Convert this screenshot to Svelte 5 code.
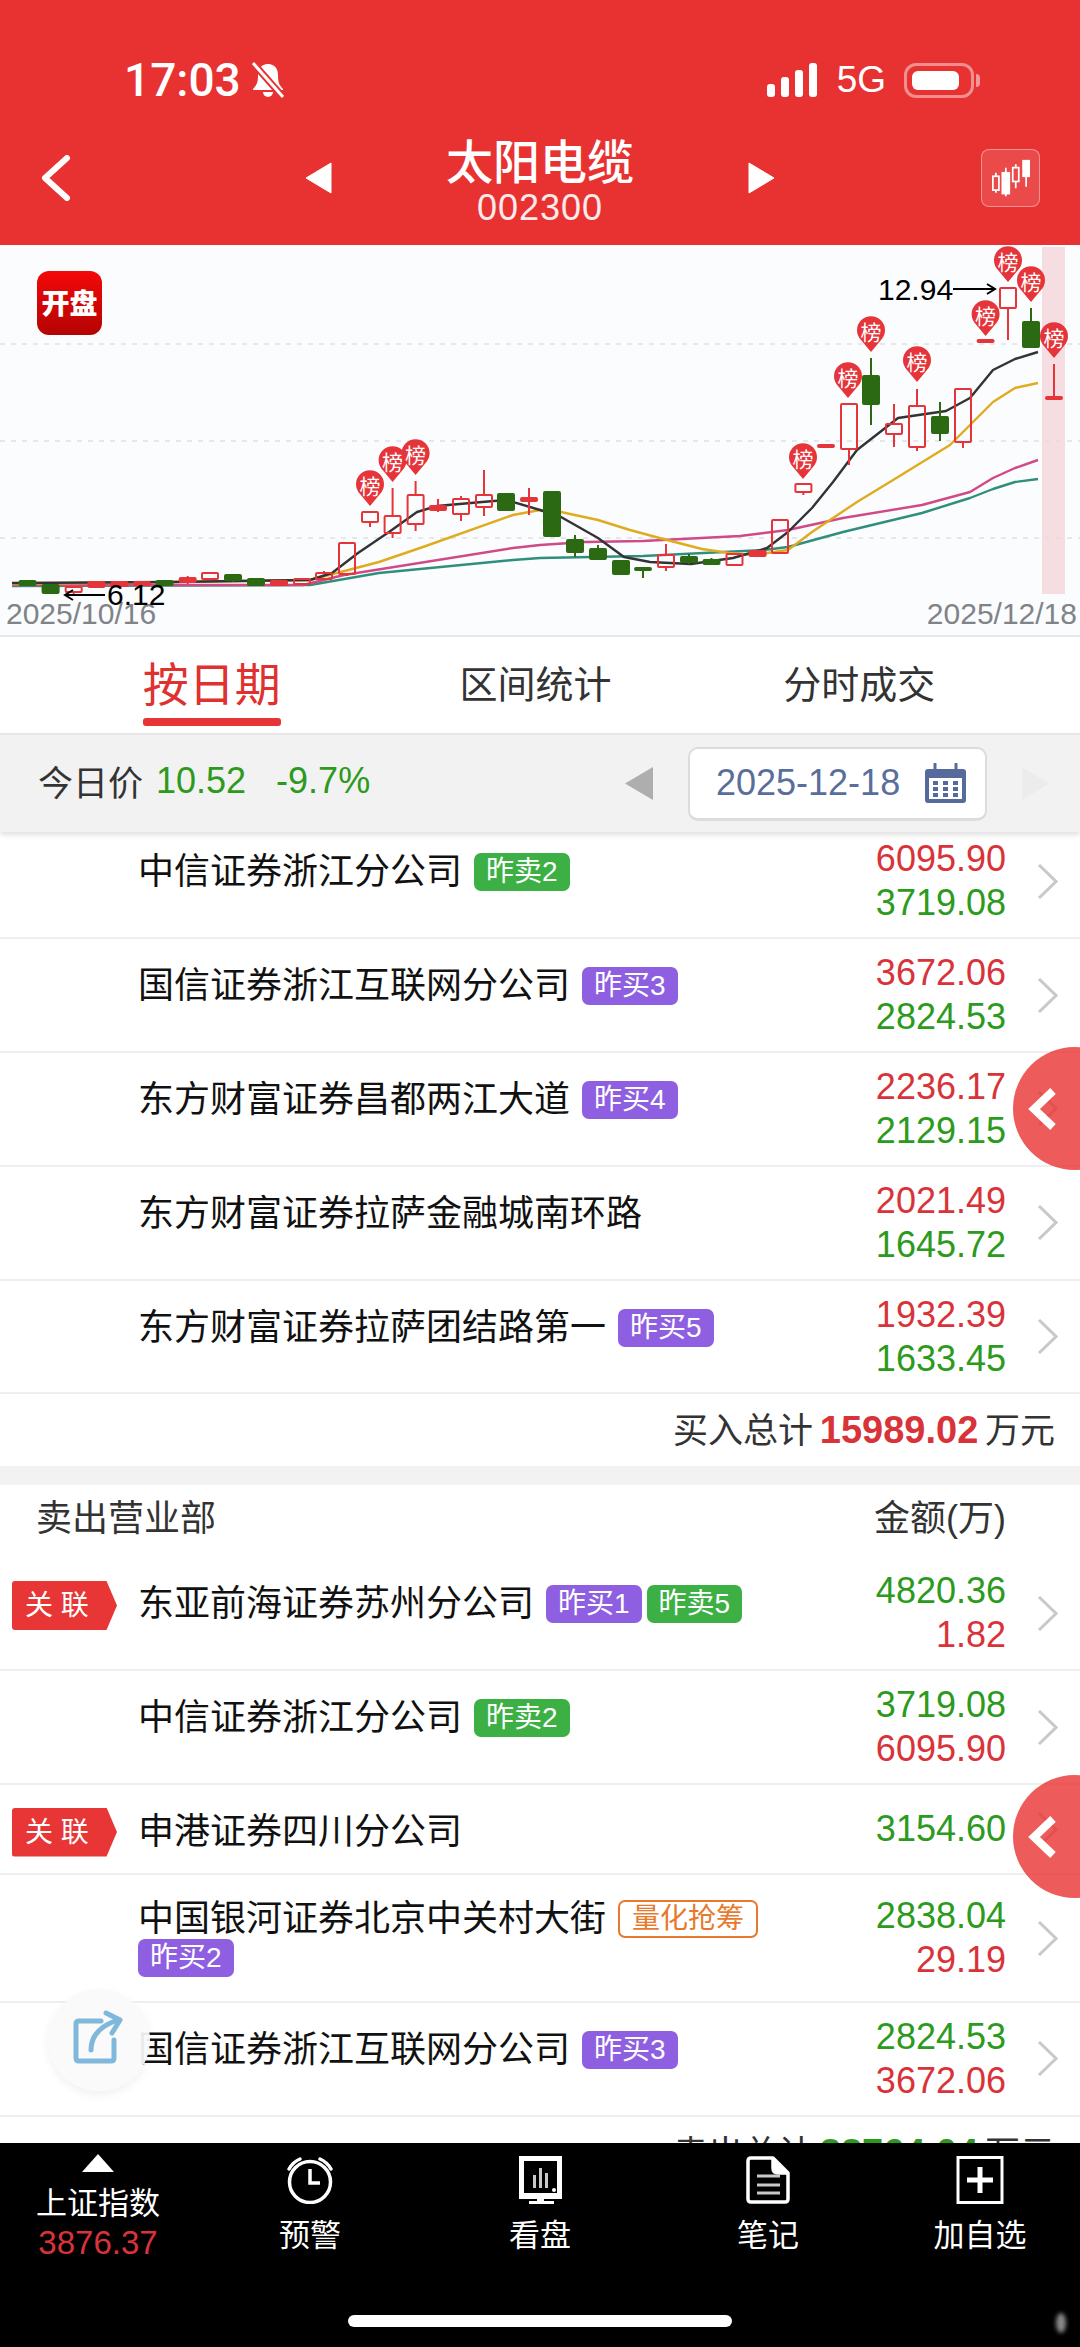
<script>
  // [x, bodyTop, bodyBottom, wickHigh, wickLow, kind]  r = hollow red, f = solid red, g = green
  const candles = [
    [27.5, 581, 585, 581, 585, 'g'], [50.6, 585, 593, 585, 594, 'g'], [73.7, 587, 592, 587, 594, 'r'],
    [96.4, 582, 587, 582, 587, 'f'], [119.5, 582, 586, 582, 586, 'f'], [142, 582, 585, 582, 585, 'f'],
    [164.6, 581, 585, 581, 585, 'g'], [187.7, 578, 582, 576, 584, 'f'], [210, 573, 579, 573, 579, 'r'],
    [233, 575, 580, 575, 582, 'g'], [256, 579, 585, 579, 585, 'g'], [279, 581, 585, 581, 585, 'f'],
    [302, 579, 584, 579, 584, 'r'], [324, 573, 579, 571, 579, 'r'], [347, 543, 574, 543, 576, 'r'],
    [370, 512, 522, 512, 527, 'r'], [392.6, 516, 533, 488, 538, 'r'], [415.6, 495, 524, 481, 531, 'r'],
    [438, 506, 510, 499, 512, 'f'], [461, 499, 514, 496, 521, 'r'], [484, 495, 507, 470, 516, 'r'],
    [506, 494, 510, 494, 510, 'g'], [529, 498, 501, 488, 515, 'f'], [552, 492, 536, 492, 536, 'g'],
    [575, 540, 552, 535, 557, 'g'], [598, 549, 559, 545, 559, 'g'], [621, 561, 574, 560, 574, 'g'],
    [643, 568, 570, 568, 578, 'g'], [666, 555, 567, 544, 571, 'r'], [689, 557, 562, 554, 564, 'g'],
    [711.5, 560, 564, 558, 565, 'g'], [734.5, 554, 565, 554, 565, 'r'], [757.6, 551, 556, 551, 556, 'f'],
    [780, 520, 553, 520, 553, 'r'], [803.4, 484, 492, 484, 495, 'r'], [826, 445, 447, 445, 447, 'f'],
    [849, 404, 449, 404, 465, 'r'], [871, 376, 404, 358, 425, 'g'], [894, 424, 434, 404, 447, 'r'],
    [917, 406, 447, 389, 451, 'r'], [940, 417, 433, 402, 441, 'g'], [963, 389, 442, 389, 448, 'r'],
    [985.6, 340, 342, 340, 342, 'f'], [1008, 288, 308, 288, 340, 'r'], [1031, 322, 347, 308, 347, 'g'],
    [1054, 397, 399, 364, 399, 'f']
  ];

  const lines = [
    { color: '#2f8f7c', pts: '12,586 310,585 379,573 513,560 540,558 643,556 764,550 788,547 843,532 922,513 970,498 993,489 1015,482 1038,479' },
    { color: '#cf4a86', pts: '12,585 303,585 344,575 513,548 540,545 585,542 643,541 740,536 788,530 843,518 922,505 970,492 993,478 1015,468 1038,460' },
    { color: '#e0ab1e', pts: '12,584 172,582 310,580 379,562 423,547 513,515 540,510 561,512 598,520 630,530 667,540 702,549 729,553 753,555 788,550 812,532 857,502 898,477 950,445 970,425 993,402 1015,388 1038,383' },
    { color: '#333333', pts: '12,583 172,582 310,580 332,573 358,553 389,532 417,512 437,506 482,502 506,500 540,510 561,517 598,538 624,557 650,562 691,564 733,558 767,548 788,532 812,508 833,482 857,450 898,418 946,411 970,398 993,370 1015,359 1038,352' }
  ];

  // [x, tip y]
  const pins = [
    [370, 506], [392.6, 482], [415.6, 475], [803, 479], [848, 398], [871, 352],
    [917, 382], [985.6, 336], [1008, 282], [1031, 302], [1054, 358]
  ];

  const pinPath = (x, tip) =>
    `M${x} ${tip}L${x - 10} ${tip - 12}A14 14 0 1 1 ${x + 10} ${tip - 12}Z`;

  const buyRows = [
    { name: '中信证券浙江分公司', tags: [['昨卖2', 'green']], a: ['6095.90', 'up'], b: ['3719.08', 'down'] },
    { name: '国信证券浙江互联网分公司', tags: [['昨买3', 'purple']], a: ['3672.06', 'up'], b: ['2824.53', 'down'] },
    { name: '东方财富证券昌都两江大道', tags: [['昨买4', 'purple']], a: ['2236.17', 'up'], b: ['2129.15', 'down'] },
    { name: '东方财富证券拉萨金融城南环路', tags: [], a: ['2021.49', 'up'], b: ['1645.72', 'down'] },
    { name: '东方财富证券拉萨团结路第一', tags: [['昨买5', 'purple']], a: ['1932.39', 'up'], b: ['1633.45', 'down'] }
  ];

  const sellRows = [
    { name: '东亚前海证券苏州分公司', flag: true, tags: [['昨买1', 'purple'], ['昨卖5', 'green']], a: ['4820.36', 'down'], b: ['1.82', 'up'] },
    { name: '中信证券浙江分公司', tags: [['昨卖2', 'green']], a: ['3719.08', 'down'], b: ['6095.90', 'up'] },
    { name: '申港证券四川分公司', flag: true, short: true, tags: [], a: ['3154.60', 'down'] },
    { name: '中国银河证券北京中关村大街', tall: true, tags: [['量化抢筹', 'orange'], ['昨买2', 'purple']], a: ['2838.04', 'down'], b: ['29.19', 'up'] },
    { name: '国信证券浙江互联网分公司', tags: [['昨买3', 'purple']], a: ['2824.53', 'down'], b: ['3672.06', 'up'] }
  ];
</script>

{#snippet row(r)}
  <div class="row" class:short={r.short} class:tall={r.tall}>
    <div class="slot">
      {#if r.flag}<span class="flag">关 联</span>{/if}
    </div>
    <div class="name">
      <span>{r.name}</span>
      {#each r.tags as t}
        <span class="tag {t[1]}">{t[0]}</span>
      {/each}
    </div>
    <div class="amounts">
      <span class={r.a[1]}>{r.a[0]}</span>
      {#if r.b}<span class={r.b[1]}>{r.b[0]}</span>{/if}
    </div>
    <svg class="chev" viewBox="0 0 21 35"><path d="M2 1L19 17.5L2 34" /></svg>
  </div>
{/snippet}

<div class="page">
  <header class="top">
    <div class="status">
      <div class="status-left">
        <span class="time">17:03</span>
        <svg width="38" height="36" viewBox="0 0 38 36">
          <path d="M19 2c-7 0-10 5-10 11 0 7-1 10-5 14v1h30v-1c-4-4-5-7-5-14 0-6-3-11-10-11z" fill="#fff" />
          <path d="M14 30a5 5 0 0 0 10 0z" fill="#fff" />
          <path d="M4 1L34 35" stroke="#e83232" stroke-width="7" />
          <path d="M4 1L34 35" stroke="#fff" stroke-width="3" />
        </svg>
      </div>
      <div class="status-right">
        <div class="signal"><i></i><i></i><i></i><i></i></div>
        <span class="net">5G</span>
        <div class="battery"><b></b></div>
      </div>
    </div>
    <nav class="nav">
      <svg class="back" width="32" height="46" viewBox="0 0 32 46"><path d="M27 3L5 23L27 43" /></svg>
      <div class="stock">
        <svg class="tri" width="28" height="32" viewBox="0 0 28 32"><path d="M27 1L2 16L27 31Z" fill="#fff" stroke="#fff" stroke-linejoin="round" /></svg>
        <div class="stock-name">
          <h1>太阳电缆</h1>
          <span>002300</span>
        </div>
        <svg class="tri" width="28" height="32" viewBox="0 0 28 32"><path d="M1 1L26 16L1 31Z" fill="#fff" stroke="#fff" stroke-linejoin="round" /></svg>
      </div>
      <div class="kline-btn">
        <svg width="40" height="38" viewBox="0 0 46 44" fill="none" stroke="#fff" stroke-width="2">
          <rect x="2" y="20" width="7" height="16" /><path d="M5.500 16v4M5.500 36v3" />
          <rect x="13" y="16" width="8" height="24" fill="#fff" /><path d="M17 10v6M17 40v3" />
          <rect x="25" y="10" width="7" height="16" /><path d="M28.500 6v4M28.500 26v8" />
          <rect x="37" y="2" width="7" height="18" fill="#fff" /><path d="M40.500 20v12" />
        </svg>
      </div>
    </nav>
  </header>

  <section class="chart">
    <svg width="1080" height="390" viewBox="0 245 1080 390">
      <rect x="1042" y="247" width="23" height="347" fill="#f6dde2" />
      {#each [344, 441, 538] as y}
        <line x1="0" x2="1080" y1={y} y2={y} stroke="#dedfe2" stroke-width="1.500" stroke-dasharray="5 6" />
      {/each}
      {#each lines as l}
        <polyline points={l.pts} fill="none" stroke={l.color} stroke-width="2.400" stroke-linejoin="round" />
      {/each}
      {#each candles as [x, top, bot, hi, lo, kind]}
        {@const col = kind === 'g' ? '#2b6a12' : '#e5343a'}
        <line x1={x} x2={x} y1={hi} y2={top} stroke={col} stroke-width="2" />
        <line x1={x} x2={x} y1={bot} y2={lo} stroke={col} stroke-width="2" />
        <rect x={x - 8} y={top} width="16" height={bot - top} rx="1"
          fill={kind === 'r' ? 'none' : col} stroke={col} stroke-width="2" />
      {/each}
      {#each pins as [x, tip]}
        <path d={pinPath(x, tip)} fill="#e5343a" />
        <text class="pin-text" x={x} y={tip - 12}>榜</text>
      {/each}

      <rect x="37" y="271" width="65" height="64" rx="12" fill="url(#open)" />
      <text class="open-text" x="69.500" y="314">开盘</text>
      <defs>
        <linearGradient id="open" x1="0" y1="0" x2="0" y2="1">
          <stop offset="0" stop-color="#f40808" />
          <stop offset="1" stop-color="#b40404" />
        </linearGradient>
      </defs>

      <text class="date-text" x="6" y="624">2025/10/16</text>
      <text class="date-text" x="1077" y="624" text-anchor="end">2025/12/18</text>
      <text class="price-text" x="878" y="300">12.94</text>
      <path d="M953 289H994M987 284L995 289L987 294" fill="none" stroke="#000" stroke-width="2" />
      <path d="M105 595H66M73 590L65 595L73 600" fill="none" stroke="#000" stroke-width="2" />
      <text class="price-text" x="107" y="605">6.12</text>
    </svg>
  </section>

  <div class="tabs">
    <div class="tab active"><span>按日期</span></div>
    <div class="tab"><span>区间统计</span></div>
    <div class="tab"><span>分时成交</span></div>
  </div>

  <div class="datebar">
    <div class="today">
      <span>今日价</span><span class="down num">10.52</span><span class="down num pct">-9.7%</span>
    </div>
    <div class="picker">
      <svg width="28" height="33" viewBox="0 0 26 33" preserveAspectRatio="none"><path d="M26 0V33L0 16.500Z" fill="#aeaeae" /></svg>
      <div class="datebox">
        <span>2025-12-18</span>
        <svg width="43" height="40" viewBox="0 0 43 40">
          <rect x="1" y="6" width="41" height="34" rx="3" fill="#566a9c" />
          <rect x="5" y="15" width="33" height="21" fill="#fff" />
          <path d="M11 1v9M32 1v9" stroke="#566a9c" stroke-width="3" stroke-linecap="round" />
          <g fill="#566a9c">
            <rect x="9" y="18" width="5" height="4" /><rect x="19" y="18" width="5" height="4" /><rect x="29" y="18" width="5" height="4" />
            <rect x="9" y="24" width="5" height="4" /><rect x="19" y="24" width="5" height="4" /><rect x="29" y="24" width="5" height="4" />
            <rect x="9" y="30" width="5" height="4" /><rect x="19" y="30" width="5" height="4" /><rect x="29" y="30" width="5" height="4" />
          </g>
        </svg>
      </div>
      <svg width="27" height="33" viewBox="0 0 27 33"><path d="M0 0V33L27 16.500Z" fill="#ececec" /></svg>
    </div>
  </div>

  <main class="list">
    <div class="list-inner">
      {#each buyRows as r}
        {@render row(r)}
      {/each}
      <div class="total">买入总计 <b class="up">15989.02</b> 万元</div>
      <div class="gap"></div>
      <div class="list-head"><span>卖出营业部</span><span>金额(万)</span></div>
      {#each sellRows as r}
        {@render row(r)}
      {/each}
      <div class="total">卖出总计 <b class="down">88764.04</b> 万元</div>
    </div>
  </main>

  <footer class="bottom">
    <div class="bottom-nav">
      <div class="index">
        <i class="index-arrow"></i>
        <span>上证指数</span>
        <span class="index-num">3876.37</span>
      </div>
      <div class="item">
        <svg viewBox="0 0 48 48" fill="none" stroke="#fff" stroke-width="3.500">
          <circle cx="24" cy="26" r="20.500" />
          <path d="M24 13V27H34" />
          <path d="M3 13Q7 6 14 3M45 13Q41 6 34 3" stroke-linecap="round" />
        </svg>
        <span>预警</span>
      </div>
      <div class="item">
        <svg viewBox="0 0 48 48">
          <path fill="#fff" fill-rule="evenodd" d="M3 0H46V43H3ZM8 5V37H41V5Z" />
          <rect x="21" y="40" width="7" height="5" fill="#fff" />
          <rect x="13" y="45" width="25" height="3" fill="#fff" />
          <path d="M18.500 19v13M24.500 12v20M30.500 17v15" stroke="#c9c9c9" stroke-width="3" />
          <circle cx="38" cy="34" r="2" fill="#fff" />
        </svg>
        <span>看盘</span>
      </div>
      <div class="item">
        <svg viewBox="0 0 48 48" fill="none" stroke="#fff" stroke-width="3.500" stroke-linejoin="round">
          <path d="M7 2H29L44 17V43Q44 46 41 46H7Q4 46 4 43V5Q4 2 7 2Z" />
          <path d="M29 2V12Q29 17 34 17H44" fill="#fff" />
          <path d="M13 20H36M13 29H36M13 37H36" stroke="#c9c9c9" stroke-width="3" />
        </svg>
        <span>笔记</span>
      </div>
      <div class="item">
        <svg viewBox="0 0 48 48" fill="none" stroke="#fff">
          <rect x="2" y="1.500" width="44" height="45" stroke-width="3" />
          <path d="M24 11V37M11 24H37" stroke-width="5" />
        </svg>
        <span>加自选</span>
      </div>
    </div>
    <div class="home"></div>
    <i class="smudge"></i>
  </footer>

  <button class="side-btn first" aria-label="收起">
    <svg width="32" height="44" viewBox="0 0 32 44"><path d="M26 4L7 22L26 40" /></svg>
  </button>
  <button class="side-btn second" aria-label="收起">
    <svg width="32" height="44" viewBox="0 0 32 44"><path d="M26 4L7 22L26 40" /></svg>
  </button>

  <button class="share" aria-label="分享">
    <svg width="52" height="54" viewBox="0 0 52 54" fill="none" stroke="#7fb8da" stroke-width="5" stroke-linecap="round" stroke-linejoin="round">
      <path d="M28 11H6Q3 11 3 14V48Q3 51 6 51H38Q41 51 41 48V30" />
      <path d="M18 40Q18 20 42 11" />
      <path d="M33 3L47 10L39 23" />
    </svg>
  </button>
</div>

<style>
  :global(body) {
    margin: 0;
    background: #fff;
  }

  .page {
    position: relative;
    display: flex;
    flex-direction: column;
    width: 1080px;
    height: 2347px;
    overflow: hidden;
    font-family: "Liberation Sans", "Noto Sans CJK SC", sans-serif;
    color: #111;
  }

  .up { color: #d9333a; }
  .down { color: #2c9a1c; }

  /* header */
  .top {
    flex: none;
    height: 245px;
    background: #e83232;
    color: #fff;
  }

  .status {
    display: flex;
    justify-content: space-between;
    align-items: center;
    height: 36px;
    padding: 62px 100px 0 124px;
  }

  .status-left,
  .status-right {
    display: flex;
    align-items: center;
  }

  .status-left { gap: 8px; }
  .status-right { gap: 18px; }

  .time {
    font-family: Roboto, "Liberation Sans", sans-serif;
    font-size: 46px;
    font-weight: 500;
  }

  .signal {
    display: flex;
    align-items: flex-end;
    gap: 6px;
    height: 34px;
  }

  .signal i {
    width: 8px;
    border-radius: 3px;
    background: #fff;
  }

  .signal i:nth-child(1) { height: 13px; }
  .signal i:nth-child(2) { height: 20px; }
  .signal i:nth-child(3) { height: 27px; }
  .signal i:nth-child(4) { height: 34px; }

  .net {
    font-size: 37px;
    margin-left: 2px;
  }

  .battery {
    position: relative;
    box-sizing: border-box;
    width: 70px;
    height: 35px;
    padding: 5px;
    border: 3px solid rgba(255, 255, 255, 0.45);
    border-radius: 12px;
    margin-right: 6px;
  }

  .battery b {
    display: block;
    width: 47px;
    height: 100%;
    border-radius: 6px;
    background: #fff;
  }

  .battery::after {
    content: "";
    position: absolute;
    right: -9px;
    top: 8px;
    width: 4px;
    height: 13px;
    border-radius: 0 4px 4px 0;
    background: rgba(255, 255, 255, 0.5);
  }

  .nav {
    display: grid;
    grid-template-columns: 1fr auto 1fr;
    align-items: center;
    padding: 38px 40px 0;
  }

  .back {
    margin-bottom: 6px;
    fill: none;
    stroke: #fff;
    stroke-width: 6;
    stroke-linecap: round;
    stroke-linejoin: round;
  }

  .stock {
    display: flex;
    align-items: center;
    gap: 114px;
  }

  .tri { margin-bottom: 6px; }

  .stock-name {
    display: flex;
    flex-direction: column;
    align-items: center;
  }

  .stock-name h1 {
    margin: 0;
    font-size: 47px;
    line-height: 54px;
    font-weight: 500;
  }

  .stock-name span {
    font-size: 36px;
    line-height: 36px;
    letter-spacing: 1px;
    color: #fdeaea;
  }

  .kline-btn {
    justify-self: end;
    display: flex;
    align-items: center;
    justify-content: center;
    box-sizing: border-box;
    width: 59px;
    height: 58px;
    margin-bottom: 6px;
    border: 1px solid rgba(255, 255, 255, 0.4);
    border-radius: 8px;
    background: rgba(255, 255, 255, 0.12);
  }

  /* chart */
  .chart {
    flex: none;
    height: 390px;
    background: #fbfcfe;
  }

  .chart svg { display: block; }

  .pin-text {
    font-size: 21px;
    fill: #fff;
    text-anchor: middle;
  }

  .open-text {
    font-size: 28px;
    font-weight: 900;
    fill: #fff;
    text-anchor: middle;
  }

  .date-text {
    font-size: 30px;
    fill: #808388;
  }

  .price-text {
    font-size: 30px;
    fill: #000;
  }

  /* tabs */
  .tabs {
    flex: none;
    display: grid;
    grid-template-columns: repeat(3, 1fr);
    height: 98px;
    padding: 0 59px 0 50px;
    border-top: 2px solid #e9e9e9;
    box-sizing: border-box;
    background: #fff;
  }

  .tab {
    position: relative;
    display: flex;
    justify-content: center;
    align-items: center;
    padding-bottom: 8px;
    font-size: 38px;
    color: #333;
  }

  .tab.active {
    font-size: 46px;
    color: #e03131;
  }

  .tab.active span {
    position: relative;
  }

  .tab.active span::after {
    content: "";
    position: absolute;
    left: 0;
    right: 0;
    bottom: -12px;
    height: 8px;
    border-radius: 3px;
    background: #e53535;
  }

  .datebar {
    position: relative;
    z-index: 1;
    flex: none;
    display: flex;
    justify-content: space-between;
    align-items: center;
    box-sizing: border-box;
    height: 99px;
    padding: 0 31px 0 38px;
    background: #f2f2f2;
    border-top: 2px solid #e6e6e6;
    box-shadow: 0 3px 5px rgba(0, 0, 0, 0.12);
  }

  .today {
    display: flex;
    align-items: center;
    margin-bottom: 6px;
    font-size: 35px;
    color: #333;
  }

  .num {
    margin-left: 13px;
    font-size: 36px;
    color: #2c9a1c;
  }

  .num.pct { margin-left: 30px; }

  .picker {
    display: flex;
    align-items: center;
    gap: 35px;
  }

  .datebox {
    display: flex;
    align-items: center;
    justify-content: space-between;
    box-sizing: border-box;
    width: 299px;
    height: 74px;
    padding: 0 18px 0 26px;
    border: 2px solid #dcdcdc;
    border-bottom-width: 3px;
    border-radius: 10px;
    background: #fff;
    font-size: 36px;
    color: #5a6e9c;
  }

  /* list */
  .list {
    flex: 1;
    min-height: 0;
    overflow: hidden;
    background: #fff;
  }

  .list-inner { margin-top: -6.5px; }

  .row {
    display: flex;
    align-items: center;
    box-sizing: border-box;
    height: 113.8px;
    padding-right: 22px;
    border-bottom: 2px solid #efefef;
  }

  .row.short { height: 90px; }
  .row.tall { height: 128px; }

  .slot {
    flex: none;
    width: 138px;
    margin-bottom: 16px;
    padding-left: 12px;
    box-sizing: border-box;
  }

  .row.short .slot,
  .row.tall .slot { margin-bottom: 0; }

  .flag {
    position: relative;
    display: inline-block;
    box-sizing: border-box;
    width: 105px;
    height: 49px;
    padding-left: 13px;
    font-size: 28px;
    line-height: 49px;
    color: #fff;
    background: #e83535;
    clip-path: polygon(0 0, 90% 0, 100% 50%, 90% 100%, 0 100%);
    border-radius: 3px 0 0 3px;
    vertical-align: middle;
  }

  .row.short .flag { margin-top: 6px; }

  .name {
    flex: 1;
    display: flex;
    flex-wrap: wrap;
    align-items: center;
    gap: 0 5px;
    margin-bottom: 18px;
    font-size: 36px;
    line-height: 40px;
    max-width: 728px;
  }

  .row.short .name {
    margin-top: 6px;
    margin-bottom: 0;
  }

  .row.tall .name {
    max-width: 640px;
    margin-bottom: 0;
  }

  .tag {
    box-sizing: border-box;
    height: 38px;
    padding: 0 12px;
    border-radius: 7px;
    font-size: 28px;
    line-height: 38px;
    color: #fff;
  }

  .name span:first-child { margin-right: 7px; }

  .tag.green { background: #3cb044; }
  .tag.purple { background: #8e5fe0; }

  .tag.orange {
    padding: 0 12px;
    border: 2px solid #e8792c;
    line-height: 34px;
    color: #e8792c;
  }

  .amounts {
    flex: none;
    display: flex;
    flex-direction: column;
    align-items: flex-end;
    margin-left: auto;
    font-size: 36px;
    line-height: 44px;
  }

  .chev {
    flex: none;
    width: 21px;
    height: 35px;
    margin-left: 31px;
    fill: none;
    stroke: #c9c9c9;
    stroke-width: 3;
  }

  .total {
    height: 72px;
    padding-right: 25px;
    text-align: right;
    font-size: 35px;
    line-height: 72px;
    word-spacing: -3px;
    color: #333;
  }

  .total b { font-size: 38px; }

  .gap {
    height: 19px;
    background: #f2f2f2;
  }

  .list-head {
    display: flex;
    justify-content: space-between;
    height: 72px;
    padding: 0 74px 0 36px;
    font-size: 36px;
    line-height: 68px;
    color: #333;
  }

  /* bottom bar */
  .bottom {
    position: relative;
    flex: none;
    height: 204px;
    background: #000;
    color: #fff;
  }

  .bottom-nav {
    display: grid;
    grid-template-columns: 196px 228px 232px 224px 200px;
    height: 172px;
  }

  .item {
    display: flex;
    flex-direction: column;
    align-items: center;
    padding-top: 13px;
    font-size: 31px;
  }

  .item svg {
    width: 48px;
    height: 48px;
    margin-bottom: 6px;
  }

  .index {
    display: flex;
    flex-direction: column;
    align-items: center;
    padding-top: 11px;
    font-size: 31px;
    line-height: 39px;
  }

  .index-arrow {
    width: 0;
    height: 0;
    margin-bottom: 12px;
    border-left: 16px solid transparent;
    border-right: 16px solid transparent;
    border-bottom: 18px solid #fff;
  }

  .index-num {
    font-size: 33px;
    color: #d9333a;
  }

  .home {
    width: 384px;
    height: 12px;
    margin: 0 auto;
    border-radius: 6px;
    background: #fff;
  }

  .smudge {
    position: absolute;
    right: 14px;
    top: 170px;
    width: 10px;
    height: 20px;
    border-radius: 50%;
    background: #8a8a8a;
    filter: blur(2px);
  }

  /* floating */
  .side-btn {
    position: absolute;
    left: 1013px;
    width: 123px;
    height: 123px;
    padding: 0 0 0 14px;
    border: 0;
    border-radius: 50%;
    background: rgba(232, 50, 50, 0.8);
    text-align: left;
  }

  .side-btn.first { top: 1047px; }
  .side-btn.second { top: 1775px; }

  .side-btn svg {
    display: block;
    fill: none;
    stroke: #fff;
    stroke-width: 8;
    stroke-linejoin: miter;
  }

  .share {
    position: absolute;
    left: 48px;
    top: 1989px;
    display: flex;
    align-items: center;
    justify-content: center;
    width: 102px;
    height: 102px;
    padding: 0 0 6px;
    border: 0;
    border-radius: 50%;
    background: rgba(250, 250, 250, 0.93);
    box-shadow: 0 4px 10px rgba(0, 0, 0, 0.06);
  }
</style>
